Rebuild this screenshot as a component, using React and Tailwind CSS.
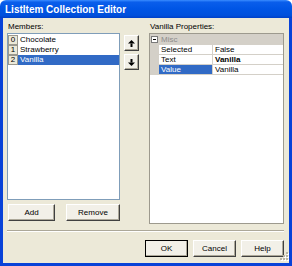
import React from "react";

const btn =
  "flex items-center justify-center bg-[#F2F0E8] border border-t-white border-l-white border-b-[#404040] border-r-[#404040] shadow-[inset_-1px_-1px_0_#ACA899] text-[8px] text-black";

function Arrow({ down }) {
  return (
    <svg width="7" height="7" viewBox="0 0 7 7" style={{ transform: down ? "rotate(180deg)" : "none" }}>
      <polygon points="3.5,0 7,3.5 0,3.5" fill="#000" />
      <rect x="2.5" y="3.5" width="2" height="3.5" fill="#000" />
    </svg>
  );
}

export default function App() {
  const items = ["Chocolate", "Strawberry", "Vanilla"];
  const props = [
    ["Selected", "False", false, false],
    ["Text", "Vanilla", true, false],
    ["Value", "Vanilla", false, true],
  ];
  return (
    <div
      className="relative w-[292px] h-[266px] flex flex-col bg-white"
      style={{ fontFamily: '"Liberation Sans", Arial, sans-serif' }}
    >
      <div className="h-[18px] rounded-t-[6px] flex items-center pl-[5px] text-white font-bold text-[10px] bg-[linear-gradient(to_bottom,#3A8CFF_0%,#0A5EEB_12%,#0055E5_50%,#0050DC_85%,#0040C8_100%)]">
        ListItem Collection Editor
      </div>
      <div className="flex-1 flex flex-col bg-[#ECE9D8] border-x-[3px] border-b-[3px] border-[#0842D8] pl-[4px] pr-[5px] pt-[3px] pb-[6px]">
        <div className="flex h-[203px]">
          {/* Left column */}
          <div className="w-[113px] flex flex-col">
            <div className="h-[12px] leading-[12px] text-[8px] pl-[1px] text-black">Members:</div>
            <div className="h-[167px] border border-[#7F9DB9] bg-white pt-[1px]">
              {items.map((it, i) => (
                <div key={it} className="flex h-[10px]">
                  <div className="w-[10px] h-[10px] border border-[#9A988E] bg-[#ECE9D8] text-[8px] leading-[8px] flex items-center justify-center text-black">
                    {i}
                  </div>
                  <div
                    className={
                      "flex-1 pl-[2px] text-[8px] leading-[10px] " +
                      (i === 2 ? "bg-[#316AC5] text-white" : "text-black")
                    }
                  >
                    {it}
                  </div>
                </div>
              ))}
            </div>
            <div className="mt-[4px] h-[17px] flex gap-[11px] pl-[1px]">
              <div className={btn + " w-[47px]"}>Add</div>
              <div className={btn + " w-[54px]"}>Remove</div>
            </div>
          </div>
          {/* Middle buttons */}
          <div className="ml-[4px] w-[15px] pt-[14px] flex flex-col gap-[3px]">
            <div className={btn + " h-[16px]"}>
              <Arrow />
            </div>
            <div className={btn + " h-[16px]"}>
              <Arrow down />
            </div>
          </div>
          {/* Right column */}
          <div className="ml-[10px] w-[135px] flex flex-col">
            <div className="h-[12px] leading-[12px] text-[8px] pl-[1px] text-black">Vanilla Properties:</div>
            <div className="h-[191px] border border-[#9D9A8E] bg-white flex flex-col">
              <div className="h-[11px] bg-[#D4D0C8] flex items-center">
                <div className="w-[9px] flex items-center justify-center">
                  <div className="w-[7px] h-[7px] border border-[#7A7A7A] bg-white flex items-center justify-center">
                    <div className="w-[3px] h-[1px] bg-black" />
                  </div>
                </div>
                <span className="pl-[2px] text-[8px] text-[#8D8D8D]">Misc</span>
              </div>
              {props.map(([n, v, bold, sel]) => (
                <div key={n} className="flex h-[10px]">
                  <div className="w-[9px] bg-[#D4D0C8]" />
                  <div
                    className={
                      "w-[54px] border-r border-b border-[#D4D0C8] pl-[2px] text-[8px] leading-[9px] " +
                      (sel ? "bg-[#316AC5] text-white" : "text-black")
                    }
                  >
                    {n}
                  </div>
                  <div
                    className={
                      "flex-1 border-b border-[#D4D0C8] pl-[2px] text-[8px] leading-[9px] text-black " +
                      (bold ? "font-bold" : "")
                    }
                  >
                    {v}
                  </div>
                </div>
              ))}
            </div>
          </div>
        </div>
        <div className="mt-[6px] h-[2px] border-t border-[#ACA899] border-b border-b-white" />
        <div className="mt-[8px] h-[17px] flex justify-end gap-[5px]">
          <div className={btn + " w-[43px] outline outline-1 outline-black -outline-offset-1"}>OK</div>
          <div className={btn + " w-[43px]"}>Cancel</div>
          <div className={btn + " w-[43px]"}>Help</div>
        </div>
      </div>
      <svg className="absolute right-[3px] bottom-[3px]" width="11" height="11" viewBox="0 0 11 11">
        {[[9, 1], [9, 4], [6, 4], [9, 7], [6, 7], [3, 7]].map(([x, y], i) => (
          <g key={i}>
            <rect x={x} y={y} width="2" height="2" fill="#fff" />
            <rect x={x - 1} y={y - 1} width="2" height="2" fill="#B8B4A4" />
          </g>
        ))}
      </svg>
    </div>
  );
}
